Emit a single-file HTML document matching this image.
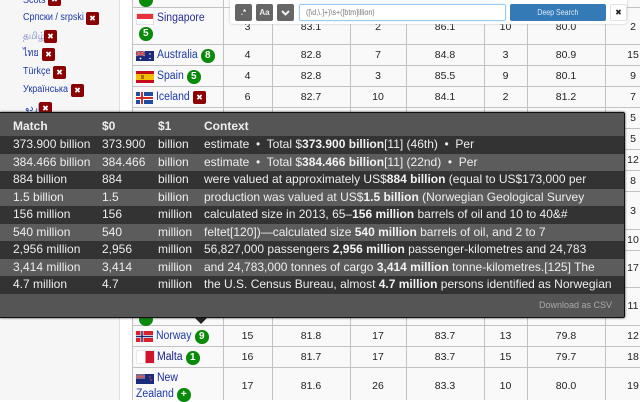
<!DOCTYPE html>
<html>
<head>
<meta charset="utf-8">
<style>
html,body{margin:0;padding:0}
body{width:640px;height:400px;overflow:hidden;position:relative;background:#fff;font-family:"Liberation Sans",sans-serif;font-size:10.5px;color:#222}
.a{position:absolute;white-space:nowrap}
.side{position:absolute;left:0;top:0;width:119px;height:400px;background:#f6f6f6;border-right:1px solid #d5e2ee}
.tbl{position:absolute;left:132px;top:0;width:508px;height:400px;background:#f9f9f9}
.v{position:absolute;top:0;height:400px;width:1px;background:#c2c2c2}
.h{position:absolute;left:132px;width:508px;height:1px;background:#c2c2c2}
.l{color:#1c3aa8;font-size:11.5px;line-height:14px;transform:scaleX(.91);transform-origin:0 50%}
.s{color:#1c3aa8;font-size:10px;line-height:14px;transform:scaleX(.9);transform-origin:0 50%}
.x{position:absolute;width:13px;height:13px;background:#8b0000;border-radius:2px;color:#fff;font:bold 8px/13px "DejaVu Sans",sans-serif;text-align:center}
.g{position:absolute;width:13.500px;height:13.500px;background:#0a8a0a;border-radius:50%;color:#fff;font:bold 10px/13.500px "Liberation Sans",sans-serif;text-align:center}
.c{position:absolute;text-align:center;font-size:10.5px;line-height:14px;color:#222}
.flag{position:absolute;width:18px;height:10px;overflow:hidden}
.panel{position:absolute;left:0;top:112px;width:624px;height:204px;background:#555;border:1px solid #111;border-left:0;border-radius:0 2px 2px 0;box-shadow:0 0 2px #333;color:#eee}
.row{position:absolute;left:0;width:624px;height:17.5px;line-height:17.5px;font-size:12px}
.row span{position:absolute;top:0;white-space:nowrap}
.row span:nth-child(1){left:13px}
.row span:nth-child(2){left:102px}
.row span:nth-child(3){left:158px}
.row span:nth-child(4){left:204px}
.d{background:#333}
.m{background:#5c5c5c}
.row b{color:#f2f2f2}
.btn{position:absolute;top:4px;width:17px;height:17px;background:#666;border-radius:2px;color:#eee;text-align:center;font:bold 8px/17px "Liberation Sans",sans-serif}
.sq{display:inline-block;font-size:8.500px;transform:scaleX(.83)}
</style>
</head>
<body>
<div class="side"></div>
<div class="s a" style="left:23px;top:-6px">Scots</div><div class="x" style="left:48px;top:-7px">✖</div>
<div class="s a" style="left:23px;top:11px">Српски / srpski</div><div class="x" style="left:86px;top:12px">✖</div>
<div class="s a" style="left:23px;top:30px;font-family:'Liberation Sans','DejaVu Sans',sans-serif;color:#6f7fc0">தமிழ்</div><div class="x" style="left:44px;top:30px">✖</div>
<div class="s a" style="left:23px;top:47px;font-family:'Liberation Sans','DejaVu Sans',sans-serif">ไทย</div><div class="x" style="left:42px;top:48px">✖</div>
<div class="s a" style="left:23px;top:65px">Türkçe</div><div class="x" style="left:53px;top:66px">✖</div>
<div class="s a" style="left:23px;top:83px">Українська</div><div class="x" style="left:71px;top:84px">✖</div>
<div class="s a" style="left:25px;top:102px;font-family:'DejaVu Sans',sans-serif">اردو</div><div class="x" style="left:39px;top:102px">✖</div>

<div class="tbl"></div>
<div class="v" style="left:132px"></div>
<div class="v" style="left:223px"></div>
<div class="v" style="left:272px"></div>
<div class="v" style="left:350px"></div>
<div class="v" style="left:406px"></div>
<div class="v" style="left:484px"></div>
<div class="v" style="left:527px"></div>
<div class="v" style="left:605px"></div>
<div class="h" style="top:7px"></div>
<div class="h" style="top:44px"></div>
<div class="h" style="top:65px"></div>
<div class="h" style="top:86px"></div>
<div class="h" style="top:107px"></div>
<div class="h" style="top:128px"></div>
<div class="h" style="top:149px"></div>
<div class="h" style="top:170px"></div>
<div class="h" style="top:191px"></div>
<div class="h" style="top:229px"></div>
<div class="h" style="top:250px"></div>
<div class="h" style="top:287px"></div>
<div class="h" style="top:325px"></div>
<div class="h" style="top:346px"></div>
<div class="h" style="top:367px"></div>

<div class="g" style="left:139px;top:-7px"></div>

<!-- Singapore -->
<div class="flag" style="left:136px;top:13px;height:12px;background:linear-gradient(#e8323c 50%,#fff 50%);box-shadow:0 0 0 1px #e2e2e2 inset"></div>
<div class="l a" style="left:157px;top:11px;color:#2a2f96">Singapore</div>
<div class="g" style="left:139px;top:27px">5</div>

<!-- Australia -->
<div class="flag" style="left:136px;top:51px;background:#1b2a7a">
<svg width="18" height="10"><rect width="9" height="5" fill="#5a4f8c"/><path d="M0 0L9 5M9 0L0 5" stroke="#d88" stroke-width="1"/><path d="M4.500 0V5M0 2.500H9" stroke="#e44" stroke-width="1"/><circle cx="14" cy="3" r=".7" fill="#fff"/><circle cx="14" cy="7.500" r=".7" fill="#fff"/><circle cx="4.500" cy="7.500" r=".9" fill="#fff"/></svg></div>
<div class="l a" style="left:157px;top:48px">Australia</div>
<div class="g" style="left:201px;top:49px">8</div>

<!-- Spain -->
<div class="flag" style="left:136px;top:71px;height:12px;background:linear-gradient(#c60b1e 25%,#f1bf00 25%,#f1bf00 75%,#c60b1e 75%)"><div style="position:absolute;left:5px;top:4px;width:3px;height:4px;background:#b5651d"></div></div>
<div class="l a" style="left:157px;top:69px">Spain</div>
<div class="g" style="left:187px;top:70px">5</div>

<!-- Iceland -->
<div class="flag" style="left:136px;top:92px;width:17px;height:12px;background:#1f4e9e">
<svg width="17" height="12"><path d="M6 0V12M0 6H17" stroke="#fff" stroke-width="4"/><path d="M6 0V12M0 6H17" stroke="#d72828" stroke-width="2"/></svg></div>
<div class="l a" style="left:156px;top:90px">Iceland</div>
<div class="x" style="left:193px;top:91px">✖</div>

<!-- Table values -->
<div class="c" style="left:223px;width:49px;top:20px">3</div>
<div class="c" style="left:272px;width:78px;top:20px">83.1</div>
<div class="c" style="left:350px;width:56px;top:20px">2</div>
<div class="c" style="left:406px;width:78px;top:20px">86.1</div>
<div class="c" style="left:484px;width:43px;top:20px">10</div>
<div class="c" style="left:527px;width:78px;top:20px">80.0</div>
<div class="c" style="left:605px;width:56px;top:20px">2</div>

<div class="c" style="left:223px;width:49px;top:48px">4</div>
<div class="c" style="left:272px;width:78px;top:48px">82.8</div>
<div class="c" style="left:350px;width:56px;top:48px">7</div>
<div class="c" style="left:406px;width:78px;top:48px">84.8</div>
<div class="c" style="left:484px;width:43px;top:48px">3</div>
<div class="c" style="left:527px;width:78px;top:48px">80.9</div>
<div class="c" style="left:605px;width:56px;top:48px">15</div>

<div class="c" style="left:223px;width:49px;top:69px">4</div>
<div class="c" style="left:272px;width:78px;top:69px">82.8</div>
<div class="c" style="left:350px;width:56px;top:69px">3</div>
<div class="c" style="left:406px;width:78px;top:69px">85.5</div>
<div class="c" style="left:484px;width:43px;top:69px">9</div>
<div class="c" style="left:527px;width:78px;top:69px">80.1</div>
<div class="c" style="left:605px;width:56px;top:69px">9</div>

<div class="c" style="left:223px;width:49px;top:90px">6</div>
<div class="c" style="left:272px;width:78px;top:90px">82.7</div>
<div class="c" style="left:350px;width:56px;top:90px">10</div>
<div class="c" style="left:406px;width:78px;top:90px">84.1</div>
<div class="c" style="left:484px;width:43px;top:90px">2</div>
<div class="c" style="left:527px;width:78px;top:90px">81.2</div>
<div class="c" style="left:605px;width:56px;top:90px">7</div>

<div class="c" style="left:605px;width:56px;top:111px">5</div>
<div class="c" style="left:605px;width:56px;top:132px">5</div>
<div class="c" style="left:605px;width:56px;top:153px">12</div>
<div class="c" style="left:605px;width:56px;top:174px">8</div>
<div class="c" style="left:605px;width:56px;top:204px">3</div>
<div class="c" style="left:605px;width:56px;top:233px">10</div>
<div class="c" style="left:605px;width:56px;top:261px">17</div>
<div class="c" style="left:605px;width:56px;top:299px">11</div>

<!-- Norway -->
<div class="flag" style="left:136px;top:331px;width:17px;height:11px;background:#d8232a">
<svg width="17" height="11"><path d="M6 0V11M0 5.500H17" stroke="#fff" stroke-width="3"/><path d="M6 0V11M0 5.500H17" stroke="#1c2a78" stroke-width="1.500"/></svg></div>
<div class="l a" style="left:156px;top:329px">Norway</div>
<div class="g" style="left:195px;top:330px">9</div>
<div class="c" style="left:223px;width:49px;top:329px">15</div>
<div class="c" style="left:272px;width:78px;top:329px">81.8</div>
<div class="c" style="left:350px;width:56px;top:329px">17</div>
<div class="c" style="left:406px;width:78px;top:329px">83.7</div>
<div class="c" style="left:484px;width:43px;top:329px">13</div>
<div class="c" style="left:527px;width:78px;top:329px">79.8</div>
<div class="c" style="left:605px;width:56px;top:329px">12</div>

<!-- Malta -->
<div class="flag" style="left:137px;top:351px;width:17px;height:12px;background:linear-gradient(90deg,#fff 50%,#cf142b 50%);box-shadow:0 0 0 1px #e8e8e8"></div>
<div class="l a" style="left:157px;top:350px;color:#1a2088">Malta</div>
<div class="g" style="left:186px;top:351px">1</div>
<div class="c" style="left:223px;width:49px;top:350px">16</div>
<div class="c" style="left:272px;width:78px;top:350px">81.7</div>
<div class="c" style="left:350px;width:56px;top:350px">17</div>
<div class="c" style="left:406px;width:78px;top:350px">83.7</div>
<div class="c" style="left:484px;width:43px;top:350px">15</div>
<div class="c" style="left:527px;width:78px;top:350px">79.7</div>
<div class="c" style="left:605px;width:56px;top:350px">18</div>

<!-- New Zealand -->
<div class="flag" style="left:136px;top:374px;background:#1b2a7a">
<svg width="18" height="10"><rect width="9" height="5" fill="#7a6a98"/><path d="M4.500 0V5M0 2.500H9" stroke="#d55" stroke-width="1"/><circle cx="14" cy="3" r=".7" fill="#e66"/><circle cx="15" cy="6" r=".7" fill="#e66"/></svg></div>
<div class="l a" style="left:157px;top:371px;color:#1a2a9e">New</div>
<div class="l a" style="left:136px;top:387px">Zealand</div>
<div class="g" style="left:177px;top:388px">+</div>
<div class="c" style="left:223px;width:49px;top:379px">17</div>
<div class="c" style="left:272px;width:78px;top:379px">81.6</div>
<div class="c" style="left:350px;width:56px;top:379px">26</div>
<div class="c" style="left:406px;width:78px;top:379px">83.3</div>
<div class="c" style="left:484px;width:43px;top:379px">10</div>
<div class="c" style="left:527px;width:78px;top:379px">80.0</div>
<div class="c" style="left:605px;width:56px;top:379px">19</div>

<div class="g" style="left:139px;top:312px"></div>

<!-- Toolbar -->
<div class="a" style="left:230px;top:0;width:397px;height:24px;background:#fff;border-radius:0 0 3px 3px;box-shadow:0 0 2px #bbb"></div>
<div class="btn" style="left:235px">.*</div>
<div class="btn" style="left:256px">Aa</div>
<div class="btn" style="left:277px"><svg width="17" height="17" style="display:block"><path d="M5 7L8.500 10.500L12 7" fill="none" stroke="#f2f2f2" stroke-width="2"/></svg></div>
<div class="a" style="left:299px;top:4px;width:199px;height:15px;line-height:15px;background:#fff;border:1px solid #9ecaf0;border-radius:2px;padding-left:6px;color:#777;box-shadow:0 0 2px #cfe4f7"><span class="sq" style="transform-origin:0 50%">([\d,\.]+)\s+([btm]illion)</span></div>
<div class="a" style="left:510px;top:4px;width:96px;height:17px;line-height:17px;background:#337ab7;border-radius:2px;color:#dfeaf4;text-align:center"><span class="sq">Deep Search</span></div>
<div class="a" style="left:610px;top:4px;width:15px;height:15px;background:#fff;border:1px solid #e2e2e2;border-radius:2px;color:#222;font:bold 8px/15px 'DejaVu Sans',sans-serif;text-align:center">✖</div>

<!-- Results panel -->
<div class="panel">
<div class="row" style="top:5px;height:18px;font-weight:bold"><span>Match</span><span>$0</span><span>$1</span><span>Context</span></div>
<div class="row d" style="top:23px"><span>373.900 billion</span><span>373.900</span><span>billion</span><span>estimate &nbsp;•&nbsp; Total $<b>373.900 billion</b>[11] (46th) &nbsp;•&nbsp; Per</span></div>
<div class="row m" style="top:40.500px"><span>384.466 billion</span><span>384.466</span><span>billion</span><span>estimate &nbsp;•&nbsp; Total $<b>384.466 billion</b>[11] (22nd) &nbsp;•&nbsp; Per</span></div>
<div class="row d" style="top:58px"><span>884 billion</span><span>884</span><span>billion</span><span>were valued at approximately US$<b>884 billion</b> (equal to US$173,000 per</span></div>
<div class="row m" style="top:75.500px"><span>1.5 billion</span><span>1.5</span><span>billion</span><span>production was valued at US$<b>1.5 billion</b> (Norwegian Geological Survey</span></div>
<div class="row d" style="top:93px"><span>156 million</span><span>156</span><span>million</span><span>calculated size in 2013, 65–<b>156 million</b> barrels of oil and 10 to 40&amp;#</span></div>
<div class="row m" style="top:110.500px"><span>540 million</span><span>540</span><span>million</span><span>feltet[120])—calculated size <b>540 million</b> barrels of oil, and 2 to 7</span></div>
<div class="row d" style="top:128px"><span>2,956 million</span><span>2,956</span><span>million</span><span>56,827,000 passengers <b>2,956 million</b> passenger-kilometres and 24,783</span></div>
<div class="row m" style="top:145.500px"><span>3,414 million</span><span>3,414</span><span>million</span><span>and 24,783,000 tonnes of cargo <b>3,414 million</b> tonne-kilometres.[125] The</span></div>
<div class="row d" style="top:163px"><span>4.7 million</span><span>4.7</span><span>million</span><span>the U.S. Census Bureau, almost <b>4.7 million</b> persons identified as Norwegian</span></div>
<div class="a" style="right:12px;top:186px;font-size:9px;line-height:12px;color:#aaa">Download as CSV</div>
</div>
<svg class="a" style="left:194px;top:318px" width="14" height="7"><path d="M1 0L7 6L13 0Z" fill="#222"/></svg>
</body>
</html>
